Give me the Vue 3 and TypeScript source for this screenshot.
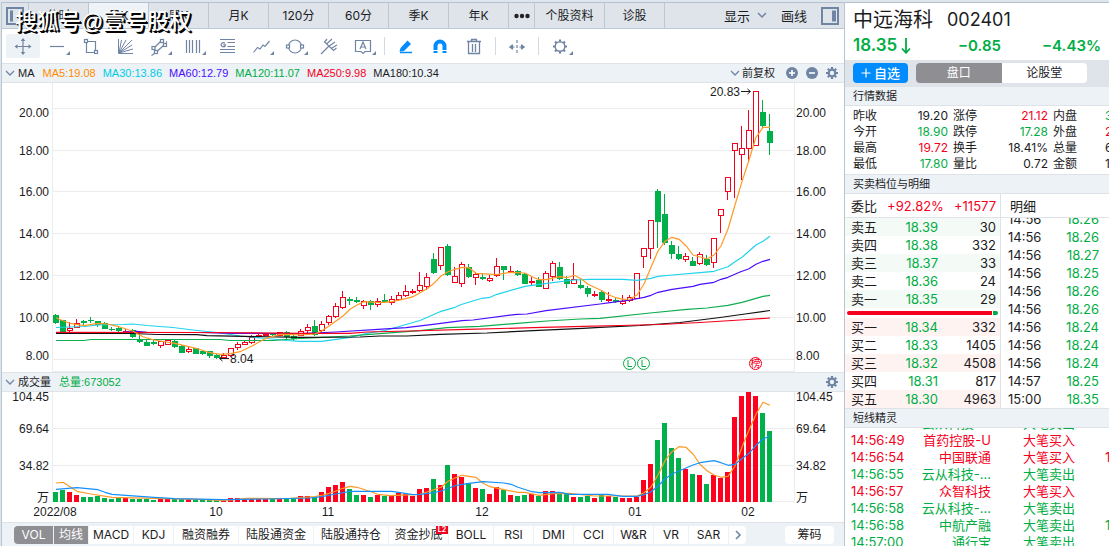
<script setup lang="ts">
import { ref } from 'vue'

type Tone = 'up' | 'down' | 'flat'
/** direction, high, body top, body bottom, low, top of the volume bar */
type Candle = ['r' | 'g', number, number, number, number, number]

const periods = ['分时', '日K', '周K', '月K', '120分', '60分', '季K', '年K']
const activePeriod = ref('日K')
const adjust = ref('前复权')

const averages = [
  { text: 'MA5:19.08', cls: 'ma5' },
  { text: 'MA30:13.86', cls: 'ma30' },
  { text: 'MA60:12.79', cls: 'ma60' },
  { text: 'MA120:11.07', cls: 'ma120' },
  { text: 'MA250:9.98', cls: 'ma250' },
  { text: 'MA180:10.34', cls: 'ma180' },
]

const priceAxis = [
  { label: '20.00', grid: 108, text: 117 },
  { label: '18.00', grid: 150, text: 155 },
  { label: '16.00', grid: 191, text: 196 },
  { label: '14.00', grid: 233, text: 238 },
  { label: '12.00', grid: 275, text: 280 },
  { label: '10.00', grid: 317, text: 322 },
  { label: '8.00', grid: 359, text: 360 },
]
const volumeAxis = [
  { label: '104.45', text: 401 },
  { label: '69.64', text: 433 },
  { label: '34.82', text: 470 },
  { label: '万', text: 502 },
]
const months = [
  { label: '2022/08', x: 55 },
  { label: '10', x: 216 },
  { label: '11', x: 328 },
  { label: '12', x: 482 },
  { label: '01', x: 635 },
  { label: '02', x: 748 },
]

const candles: Candle[] = [
  ['g', 314, 315, 323, 324, 492], ['g', 320, 320, 332, 332, 490], ['r', 322, 328, 330, 332, 492],
  ['r', 319, 323, 327, 328, 495], ['g', 320, 321, 323, 325, 497], ['g', 317, 320, 321, 323, 497],
  ['g', 321, 321, 325, 327, 496], ['g', 322, 323, 329, 329, 498], ['g', 327, 329, 330, 331, 499],
  ['g', 327, 328, 331, 332, 498], ['r', 329, 331, 332, 334, 498], ['g', 329, 330, 337, 338, 499],
  ['g', 334, 339, 342, 343, 499], ['g', 340, 342, 346, 346, 499], ['g', 340, 342, 344, 345, 500],
  ['r', 341, 341, 345, 348, 499], ['r', 340, 340, 344, 345, 498], ['g', 340, 341, 347, 348, 499],
  ['g', 345, 346, 353, 353, 499], ['r', 347, 349, 351, 353, 499], ['g', 348, 348, 354, 354, 500],
  ['g', 350, 351, 354, 355, 500], ['g', 351, 351, 356, 358, 500], ['g', 354, 355, 358, 359, 500],
  ['r', 353, 355, 357, 359, 500], ['r', 348, 348, 355, 357, 498], ['r', 342, 344, 347, 350, 498],
  ['r', 341, 342, 344, 345, 499], ['r', 335, 337, 342, 344, 499], ['r', 333, 335, 336, 338, 499],
  ['r', 333, 334, 335, 336, 499], ['g', 333, 334, 335, 336, 499], ['r', 332, 332, 335, 336, 498],
  ['g', 331, 332, 337, 339, 499], ['g', 335, 336, 339, 341, 499], ['r', 329, 331, 335, 336, 496],
  ['r', 324, 327, 330, 333, 496], ['g', 320, 326, 335, 336, 497], ['r', 321, 324, 330, 332, 492],
  ['r', 315, 316, 322, 325, 487], ['r', 303, 306, 316, 318, 485], ['r', 291, 297, 307, 309, 482],
  ['g', 297, 299, 301, 305, 489], ['g', 297, 300, 302, 303, 495], ['r', 300, 301, 305, 309, 495],
  ['g', 300, 301, 305, 310, 497], ['r', 298, 301, 304, 307, 495], ['g', 294, 300, 302, 303, 496],
  ['r', 296, 299, 302, 305, 496], ['r', 292, 295, 299, 301, 493], ['r', 285, 291, 295, 297, 494],
  ['r', 289, 291, 292, 294, 496], ['r', 272, 285, 290, 292, 489], ['r', 273, 277, 286, 290, 488],
  ['g', 253, 259, 273, 274, 479], ['r', 247, 247, 265, 270, 485], ['g', 244, 246, 275, 276, 465],
  ['r', 267, 276, 282, 283, 474], ['r', 262, 264, 283, 287, 477], ['g', 264, 267, 277, 278, 483],
  ['r', 272, 274, 277, 285, 488], ['g', 273, 277, 279, 280, 489], ['r', 275, 278, 280, 282, 494],
  ['r', 258, 266, 275, 277, 487], ['g', 266, 266, 270, 280, 490], ['r', 266, 271, 272, 273, 495],
  ['g', 270, 271, 275, 276, 496], ['g', 273, 274, 284, 284, 495], ['r', 276, 281, 282, 285, 494],
  ['g', 277, 280, 287, 287, 496], ['r', 271, 273, 288, 289, 491], ['r', 261, 263, 276, 281, 491],
  ['g', 262, 267, 279, 280, 493], ['g', 276, 279, 284, 288, 494], ['r', 263, 279, 283, 284, 497],
  ['g', 279, 285, 288, 289, 497], ['g', 286, 288, 294, 297, 496], ['r', 291, 294, 295, 297, 498],
  ['g', 291, 292, 300, 302, 495], ['r', 292, 299, 300, 302, 496], ['g', 297, 300, 302, 303, 497],
  ['r', 295, 301, 303, 305, 498], ['r', 295, 297, 300, 302, 498], ['r', 273, 273, 298, 299, 497],
  ['r', 248, 248, 256, 268, 480], ['r', 220, 220, 248, 259, 464], ['g', 189, 191, 222, 248, 440],
  ['g', 194, 214, 243, 245, 423], ['g', 241, 245, 254, 259, 448], ['g', 246, 254, 259, 260, 458],
  ['r', 253, 256, 259, 262, 469], ['g', 257, 261, 266, 266, 474], ['r', 252, 254, 263, 265, 475],
  ['g', 255, 259, 265, 266, 484], ['r', 238, 238, 262, 268, 475], ['r', 209, 209, 215, 233, 478],
  ['r', 177, 177, 191, 200, 472], ['r', 143, 143, 150, 198, 417], ['r', 126, 148, 154, 180, 396],
  ['r', 110, 130, 148, 162, 392], ['r', 91, 91, 145, 146, 396], ['g', 100, 112, 126, 128, 413],
  ['g', 114, 131, 143, 155, 431],
]
const centre = (i: number) => 56 + i * 7

const priceLines = [
  { cls: 'ma30', points: '56,327.5 84,326.5 98,325 123,324.5 133,324 147,325.5 173,327.5 193,330 217,332.5 240,336 267,338.5 287,340.5 300,341.3 322,341.3 336,339.3 350,337.3 367,333.3 385,330.5 399,326.5 420,320.5 440,311.7 455,307.3 462,304.3 482,298.3 490,297.3 497,294.3 525,286.3 547,283.3 574,280 590,279.3 623,279.3 637,280.3 651,278.3 658,276.3 672,275 700,272.6 714,271.3 728,266.7 735,261.7 742,257.3 756,245 763,241.3 770,236.3' },
  { cls: 'ma60', points: '56,332.5 123,332.3 137,331.3 147,332.3 200,332.5 233,333.3 267,333.5 300,333.7 336,332 378,329.3 406,327.7 433,324.3 462,320.7 473,320 517,314.3 527,314 546,310.7 600,304 610,302.7 630,300 644,297.3 651,295.3 658,292.3 672,289.3 693,286.3 700,284.3 714,282.3 721,279.3 728,277.3 740,272 749,268.7 756,264.3 763,261.3 770,259.3' },
  { cls: 'ma120', points: '56,340.5 84,340.5 91,339.5 220,339.5 230,340.5 273,340.5 300,338.5 322,337.3 350,336 383,333.3 420,330.7 447,327.7 480,326.3 517,323.3 547,321 580,319 600,318.3 650,313 687,309.3 707,308 728,305.3 742,302.3 756,298.3 763,296.3 770,295.3' },
  { cls: 'ma180', points: '56,333.5 133,333.5 157,334.5 197,334.7 207,335.7 300,337.3 360,337 380,336 407,336 440,334.3 487,333 533,330.7 583,328.3 600,327.3 640,325.5 680,322.5 720,317.5 745,314 770,310.5' },
  { cls: 'ma250', points: '56,332.3 200,332.5 300,333.3 350,333.3 367,332 410,331 467,329.3 533,327.7 583,326.3 620,325.5 660,324.5 700,322.5 740,320 770,318' },
  { cls: 'ma5', points: '56,317.7 63,320.7 70,323.3 84,325.7 98,323.3 107,324 119,326.7 133,331.3 143,336.7 154,340 175,343.3 196,348.3 210,352.7 220,354.3 231,353.7 240,351.7 252,346 266,338.3 280,334.3 293,334.7 300,335 315,334 322,330.7 329,326 336,321 343,316 350,309.3 357,305 364,301.7 380,302.7 392,301.7 406,298.7 413,296.7 427,288.7 434,283.3 441,276 448,271.7 455,269.3 462,267.3 469,267.7 476,273.3 497,274.7 511,272.3 525,273 532,276.7 539,279.7 546,279.7 560,276.7 567,277.7 574,275.3 581,278.7 588,284.3 602,290.7 609,295 616,297.7 623,299.3 630,299 637,295 644,284 651,267.3 658,251 665,241.3 672,237.3 679,239.3 686,245.7 693,255 707,259 714,255 721,246 728,229 735,205 742,181.7 749,160 756,137.3 763,127.3 770,127.3' },
]
const volumeLines = [
  { cls: 'ma5', points: '56,483 63,482.3 70,486.7 77,491.3 91,494 112,497.3 154,498.3 200,499.3 223,500.7 247,498.3 277,498.7 290,498.3 315,496.7 323,495 329,493.3 336,491 343,488.3 350,486.3 357,487.3 371,491.7 378,494.3 390,495.7 420,494.3 427,492 441,487.3 448,481.3 455,478 462,475.3 476,477.3 483,483.3 490,486.7 504,489.7 518,492.3 525,492.3 539,495.3 553,493.7 570,493.3 594,496 637,496 644,492.7 651,487 658,475 665,460.7 672,451.7 679,446.7 686,447.3 693,454 700,464.3 707,470.7 714,475 721,477.3 728,476.3 735,466 742,447 749,430 756,414.3 763,402.3 770,405.3' },
  { cls: 'ma10', points: '56,489.3 77,487.7 98,489.7 105,492.3 112,494.3 154,497.3 175,498.7 223,499.7 267,499 310,498 322,496.7 336,494 350,491.3 392,491.3 413,494.7 420,494.3 434,492.7 441,491 455,485.7 469,483.3 483,481.7 504,483 511,484.3 518,487.3 532,491.7 539,492.7 560,492.3 570,494.3 608,494.3 623,496.3 637,496.3 644,494.7 651,491.7 658,486 665,479 672,474 693,465 700,462.7 714,460.7 721,462.7 728,465.3 735,464.3 749,453.3 756,445.3 763,439.3 770,435.7' },
]

const indicators = [
  { text: 'VOL', w: 'w39', on: true },
  { text: '均线', w: 'w34', on: true },
  { text: 'MACD', w: 'w44' },
  { text: 'KDJ', w: 'w39' },
  { text: '融资融券', w: 'w64' },
  { text: '陆股通资金', w: 'w74' },
  { text: '陆股通持仓', w: 'w74' },
  { text: '资金抄底', w: 'w59', level2: true },
  { text: 'BOLL', w: 'w44' },
  { text: 'RSI', w: 'w39' },
  { text: 'DMI', w: 'w39' },
  { text: 'CCI', w: 'w39' },
  { text: 'W&R', w: 'w39' },
  { text: 'VR', w: 'w34' },
  { text: 'SAR', w: 'w39' },
]

const quote: [string, string, Tone][][] = [
  [['昨收', '19.20', 'flat'], ['涨停', '21.12', 'up'], ['内盘', '3', 'down']],
  [['今开', '18.90', 'down'], ['跌停', '17.28', 'down'], ['外盘', '2', 'up']],
  [['最高', '19.72', 'up'], ['换手', '18.41%', 'flat'], ['总量', '6', 'flat']],
  [['最低', '17.80', 'down'], ['量比', '0.72', 'flat'], ['金额', '1', 'flat']],
]
const asks = [
  ['卖五', '18.39', '30'], ['卖四', '18.38', '332'], ['卖三', '18.37', '33'],
  ['卖二', '18.36', '24'], ['卖一', '18.35', '29'],
]
const bids = [
  ['买一', '18.34', '332'], ['买二', '18.33', '1405'], ['买三', '18.32', '4508'],
  ['买四', '18.31', '817'], ['买五', '18.30', '4963'],
]
const buyShare = ref(96)
const ticks = [
  ['14:56', '18.26'], ['14:56', '18.26'], ['14:56', '18.27'], ['14:56', '18.25'],
  ['14:56', '18.26'], ['14:56', '18.26'], ['14:56', '18.24'], ['14:56', '18.24'],
  ['14:56', '18.24'], ['14:57', '18.25'], ['15:00', '18.35'],
]
const alerts: { time: string; name: string; act: string; tone: Tone; qty: string }[] = [
  { time: '', name: '云从科技-...', act: '大笔卖出', tone: 'down', qty: '' },
  { time: '14:56:49', name: '首药控股-U', act: '大笔买入', tone: 'up', qty: '' },
  { time: '14:56:54', name: '中国联通', act: '大笔买入', tone: 'up', qty: '1' },
  { time: '14:56:55', name: '云从科技-...', act: '大笔卖出', tone: 'down', qty: '' },
  { time: '14:56:57', name: '众智科技', act: '大笔买入', tone: 'up', qty: '' },
  { time: '14:56:58', name: '云从科技-...', act: '大笔卖出', tone: 'down', qty: '' },
  { time: '14:56:58', name: '中航产融', act: '大笔卖出', tone: 'down', qty: '1' },
  { time: '14:57:00', name: '通行宝', act: '大笔卖出', tone: 'down', qty: '' },
]
const gearTeeth = [0, 45, 90, 135, 180, 225, 270, 315]
</script>

<template>
  <div class="page">
    <main class="main">
      <nav class="periods">
        <button class="side" aria-label="左侧栏">
          <svg width="18" height="18" viewBox="0 0 18 18"><rect x="1" y="1" width="16" height="16" fill="none" stroke="#7085a3" stroke-width="2" /><rect x="4" y="3.500" width="3" height="11" fill="#7085a3" /></svg>
        </button>
        <button v-for="p in periods" :key="p" class="period" :class="{ on: p === activePeriod }" @click="activePeriod = p">{{ p }}</button>
        <button class="period more" aria-label="更多周期">
          <svg width="16" height="6" viewBox="0 0 16 6" fill="#222"><circle cx="2.500" cy="3" r="2.200" /><circle cx="8" cy="3" r="2.200" /><circle cx="13.500" cy="3" r="2.200" /></svg>
        </button>
        <button class="period info">个股资料</button>
        <button class="period">诊股</button>
        <span class="grow"></span>
        <button class="plain">显示
          <svg width="10" height="7" viewBox="0 0 10 7"><path d="M1 1l4 4 4-4" fill="none" stroke="#7085a3" stroke-width="1.500" /></svg>
        </button>
        <button class="plain">画线</button>
        <button class="plain" aria-label="右侧栏">
          <svg width="18" height="18" viewBox="0 0 18 18"><rect x="1" y="1" width="16" height="16" fill="none" stroke="#7085a3" stroke-width="2" /><rect x="11" y="3.500" width="4" height="11" fill="#7085a3" /></svg>
        </button>
        <span class="watermark">搜狐号@壹号股权</span>
      </nav>

      <div class="tools">
        <button class="tool on" aria-label="移动"><svg viewBox="0 0 34 24"><path d="M17 5v15M9.500 12.500h15" /><path class="solid" d="M17 4l2.300 3h-4.600zM17 21l2.300-3h-4.600zM8.500 12.500l3-2.300v4.600zM25.500 12.500l-3-2.300v4.600z" /></svg></button>
        <button class="tool" aria-label="直线"><svg viewBox="0 0 34 24"><path d="M10 12.500h14" /><path class="solid" d="M30 17v4h-4z" /></svg></button>
        <button class="tool" aria-label="矩形"><svg viewBox="0 0 34 24"><path d="M13.500 7.500H21.500V16.500M20.500 18.500H12.500V8.500" /><rect x="10.500" y="5.500" width="3" height="3" /><rect x="20.500" y="16.500" width="3" height="3" /></svg></button>
        <button class="tool" aria-label="角度线"><svg viewBox="0 0 34 24" class="thin"><path d="M10.500 5v14.500H25M11 19l2.500-13M11 19L18 6M11 19L24 6M11 19l13-8M11 19l14-4" /></svg></button>
        <button class="tool" aria-label="平行线"><svg viewBox="0 0 34 24"><path d="M12.500 13.500L18.500 7.500M22 11L15.500 17M12.500 19.500l-3 2M24 8.500l1-1" /><rect class="blank" x="18.500" y="5.500" width="3" height="3" /><rect class="blank" x="10" y="12.500" width="3" height="3" /><rect class="blank" x="21.500" y="9.500" width="3" height="3" /><rect class="blank" x="12.500" y="16.500" width="3" height="3" /><path class="solid" d="M30 17v4h-4z" /></svg></button>
        <button class="tool" aria-label="周期线"><svg viewBox="0 0 34 24"><path d="M10.500 6v13M13.500 6v13M16.500 6v13M20.500 6v13M23.500 6v13" /><path class="solid" d="M30 17v4h-4z" /></svg></button>
        <button class="tool" aria-label="黄金分割"><svg viewBox="0 0 34 24"><path d="M10 5.500h15M17.500 8.500h7.500M17.500 12.500h7.500M10 15.500h15M10 18.500h15M15 9.200a2.300 2 0 1 0 .3 2.600v-1h-2" /></svg></button>
        <button class="tool" aria-label="折线"><svg viewBox="0 0 34 24"><path d="M9.500 18.500l4-5 2.500 1.500 3-4 2 1.500 4.500-5.500" /><path class="solid" d="M30 17v4h-4z" /></svg></button>
        <button class="tool" aria-label="圆"><svg viewBox="0 0 34 24"><circle cx="17" cy="12.500" r="6.500" /><rect class="blank" x="8.500" y="11" width="3" height="3" /><rect class="blank" x="22.500" y="11" width="3" height="3" /><path class="solid" d="M30 17v4h-4z" /></svg></button>
        <button class="tool" aria-label="音叉线"><svg viewBox="0 0 34 24"><path d="M9 20L16.500 12.500M15 5L12.500 8 21.500 16.500 24.500 14M16.500 12.500L23 8M14.500 10L20 5M19 14.500l6-3.500" /></svg></button>
        <button class="tool" aria-label="文字"><svg viewBox="0 0 34 24"><path d="M9.500 6.500h15v11h-5.500l-2 2-2-2H9.500z" /><path d="M14 15l3-7 3 7M15 13h4" /><path class="solid" d="M30 17v4h-4z" /></svg></button>
        <i class="bar"></i>
        <button class="tool blue" aria-label="画笔"><svg viewBox="0 0 34 24"><path class="solid" d="M11.500 14L18.500 6.500l3.500 3.500-7 7-4.500.8z" /><path d="M11 18.500h12" stroke-width="1.500" /></svg></button>
        <button class="tool blue" aria-label="磁吸"><svg viewBox="0 0 34 24"><path class="solid" d="M10.500 19v-7a6.500 6.500 0 0 1 13 0v7h-4v-7a2.500 2.500 0 0 0-5 0v7z" /><path d="M10 16.500h5M19 16.500h5" stroke="#fff" /></svg></button>
        <button class="tool" aria-label="删除"><svg viewBox="0 0 34 24"><path d="M10 7.500h14M14.500 7V5.500h5V7M11.500 8v11.500h11V8M15.500 10v8M18.500 10v8" stroke-width="1.300" /></svg></button>
        <i class="bar"></i>
        <button class="tool" aria-label="区间"><svg viewBox="0 0 34 24"><path d="M17 6v14" stroke-dasharray="3 2" /><path d="M9.500 13h5M19.500 13h5M12.500 10.500v5M21.500 10.500v5" /><path class="solid" d="M9 13l3-2.500v5zM25 13l-3-2.500v5z" /></svg></button>
        <i class="bar"></i>
        <button class="tool" aria-label="设置"><svg viewBox="0 0 34 24"><circle cx="17" cy="12.500" r="4.800" stroke-width="1.400" /><path v-for="a in gearTeeth" :key="a" d="M17 5.500v2" stroke-width="2" :transform="`rotate(${a} 17 12.500)`" /><path class="solid" d="M30 17v4h-4z" /></svg></button>
      </div>

      <div class="caption">
        <svg class="chev" width="10" height="7" viewBox="0 0 10 7"><path d="M1 1l4 4 4-4" fill="none" stroke="#7085a3" stroke-width="1.300" /></svg>
        <span class="name">MA</span>
        <span v-for="m in averages" :key="m.text" class="avg" :class="m.cls">{{ m.text }}</span>
        <span class="grow"></span>
        <label class="adjust">
          <svg width="10" height="7" viewBox="0 0 10 7"><path d="M1 1l4 4 4-4" fill="none" stroke="#7085a3" stroke-width="1.300" /></svg>
          <select v-model="adjust" aria-label="复权方式"><option>前复权</option></select>
        </label>
        <button class="mini" aria-label="放大"><svg width="12" height="12" viewBox="0 0 12 12"><circle cx="6" cy="6" r="6" fill="#7085a3" /><path d="M3 6h6M6 3v6" stroke="#fff" stroke-width="1.600" /></svg></button>
        <button class="mini" aria-label="缩小"><svg width="12" height="12" viewBox="0 0 12 12"><circle cx="6" cy="6" r="6" fill="#7085a3" /><path d="M3 6h6" stroke="#fff" stroke-width="1.600" /></svg></button>
        <button class="mini" aria-label="均线设置"><svg width="12" height="12" viewBox="0 0 12 12"><circle cx="6" cy="6" r="3.300" fill="none" stroke="#7085a3" stroke-width="2.200" /><path v-for="a in gearTeeth" :key="a" d="M6 0v2" stroke="#7085a3" stroke-width="2.200" :transform="`rotate(${a} 6 6)`" /></svg></button>
      </div>

      <svg class="chart" viewBox="2 83 842 289">
        <g class="grid">
          <path v-for="t in priceAxis" :key="t.label" :d="`M53 ${t.grid}.500H794`" />
          <path d="M52.500 83V371.500H794.500V83" />
        </g>
        <g v-for="t in priceAxis" :key="t.label" class="axis">
          <text x="49" :y="t.text" text-anchor="end">{{ t.label }}</text>
          <text x="796" :y="t.text">{{ t.label }}</text>
        </g>
        <g v-for="(c, i) in candles" :key="i" :class="c[0]">
          <path class="wick" :d="`M${centre(i) - 0.5} ${c[1]}V${c[2]}M${centre(i) - 0.5} ${c[3]}V${c[4]}`" />
          <rect v-if="c[0] === 'g'" class="body" :x="centre(i) - 3" :y="c[2]" width="6" :height="c[3] - c[2]" />
          <rect v-else class="hollow" :x="centre(i) - 2.5" :y="c[2] + 0.5" width="5" :height="c[3] - c[2]" />
        </g>
        <polyline v-for="l in priceLines" :key="l.cls" class="line" :class="l.cls" :points="l.points" />
        <text class="mark" x="710" y="96">20.83</text>
        <path class="arrow" d="M741 91.500h9M747.500 89l3 2.500-3 2.500" />
        <text class="mark" x="230" y="363">8.04</text>
        <path class="arrow" d="M220 358.500h9M222.500 356l-3 2.500 3 2.500" />
        <g class="event down"><circle cx="629.500" cy="363.500" r="6" /><path d="M628 360v6.500h4" /><circle cx="643.500" cy="363.500" r="6" /><path d="M642 360v6.500h4" /></g>
        <g class="event up"><circle cx="755.500" cy="363.500" r="6" /><text x="755.500" y="367" text-anchor="middle">榜</text></g>
      </svg>

      <div class="caption volume">
        <svg class="chev" width="10" height="7" viewBox="0 0 10 7"><path d="M1 1l4 4 4-4" fill="none" stroke="#7085a3" stroke-width="1.300" /></svg>
        <span class="name">成交量</span>
        <span class="avg ma120">总量:673052</span>
        <span class="grow"></span>
        <button class="mini" aria-label="成交量设置"><svg width="12" height="12" viewBox="0 0 12 12"><circle cx="6" cy="6" r="3.300" fill="none" stroke="#7085a3" stroke-width="2.200" /><path v-for="a in gearTeeth" :key="a" d="M6 0v2" stroke="#7085a3" stroke-width="2.200" :transform="`rotate(${a} 6 6)`" /></svg></button>
      </div>

      <svg class="chart" viewBox="2 392 842 130">
        <path class="grid" d="M52.500 392V501.500H794.500V392M53 428.500H794M53 465.500H794" />
        <g v-for="t in volumeAxis" :key="t.label" class="axis">
          <text x="49" :y="t.text" text-anchor="end">{{ t.label }}</text>
          <text x="796" :y="t.text">{{ t.label }}</text>
        </g>
        <rect v-for="(c, i) in candles" :key="i" class="body" :class="c[0]" :x="centre(i) - 3" :y="c[5]" width="5" :height="502 - c[5]" />
        <polyline v-for="l in volumeLines" :key="l.cls" class="line" :class="l.cls" :points="l.points" />
        <text v-for="m in months" :key="m.label" class="axis" :x="m.x" y="516" text-anchor="middle">{{ m.label }}</text>
      </svg>

      <div class="indicators">
        <button v-for="t in indicators" :key="t.text" class="ind" :class="[t.w, { on: t.on }]">{{ t.text }}<b v-if="t.level2" class="badge">L2</b></button>
        <button class="ind next" aria-label="更多指标"><svg width="8" height="10" viewBox="0 0 8 10"><path d="M2 1l4 4-4 4" fill="none" stroke="#7085a3" stroke-width="1.600" /></svg></button>
        <span class="grow"></span>
        <button class="ind chips">筹码</button>
      </div>
    </main>

    <aside class="panel">
      <h1 class="title"><span>中远海科</span><span>002401</span></h1>
      <div class="price down">
        <span>18.35<svg width="10" height="16" viewBox="0 0 10 16"><path d="M5 0v14.500M1 10.500l4 4.300 4-4.300" fill="none" stroke="currentColor" stroke-width="1.800" /></svg></span>
        <span>−0.85</span>
        <span>−4.43%</span>
      </div>
      <div class="switch">
        <button class="add"><svg width="10" height="10" viewBox="0 0 10 10"><path d="M0.500 5h9M5 .5v9" stroke="#fff" stroke-width="1.200" /></svg>自选</button>
        <div class="segments"><button class="on">盘口</button><button>论股堂</button></div>
      </div>
      <h2 class="section">行情数据</h2>
      <table class="quote">
        <tbody>
          <tr v-for="(row, r) in quote" :key="r">
            <template v-for="cell in row" :key="cell[0]"><th scope="row">{{ cell[0] }}</th><td :class="cell[2]">{{ cell[1] }}</td></template>
          </tr>
        </tbody>
      </table>
      <h2 class="section">买卖档位与明细</h2>
      <div class="depth">
        <div class="book">
          <div class="ratio"><span>委比</span><span class="up">+92.82%</span><span class="up">+11577</span></div>
          <table class="levels asks"><tbody><tr v-for="a in asks" :key="a[0]"><th scope="row">{{ a[0] }}</th><td class="down">{{ a[1] }}</td><td>{{ a[2] }}</td></tr></tbody></table>
          <div class="balance"><i class="buy" :style="{ width: buyShare + '%' }"></i><i class="sell"></i></div>
          <table class="levels bids"><tbody><tr v-for="b in bids" :key="b[0]"><th scope="row">{{ b[0] }}</th><td class="down">{{ b[1] }}</td><td>{{ b[2] }}</td></tr></tbody></table>
        </div>
        <div class="tape">
          <div class="tapehead">明细</div>
          <div class="tapebody">
            <table class="ticks"><tbody><tr v-for="(t, i) in ticks" :key="i"><td>{{ t[0] }}</td><td class="down">{{ t[1] }}</td></tr></tbody></table>
          </div>
        </div>
      </div>
      <h2 class="section">短线精灵</h2>
      <div class="feed">
        <table class="alerts"><tbody>
          <tr v-for="(a, i) in alerts" :key="i" :class="a.tone"><td>{{ a.time }}</td><td>{{ a.name }}</td><td>{{ a.act }}</td><td>{{ a.qty }}</td></tr>
        </tbody></table>
      </div>
    </aside>
  </div>
</template>

<style>
body { margin: 0; background: #dee5ec; }
</style>

<style scoped>
* { box-sizing: border-box; }
.page {
  display: grid;
  grid-template-columns: minmax(0, 1fr) 265px;
  height: 100vh;
  padding: 2px 0 0 1px;
  overflow: hidden;
  color: #1c1c1e;
  font: 12px/16px "Liberation Sans", "Noto Sans CJK SC", sans-serif;
}
button { margin: 0; padding: 0; border: 0; background: none; color: inherit; font: inherit; cursor: pointer; }
svg { display: block; flex: none; }
.grow { flex: 1; }
.up { color: #f5001d; }
.down { color: #00ad45; }
.flat { color: #1c1c1e; }

.main { display: flex; flex-direction: column; min-width: 0; background: #fff; border-left: 1px solid #bac5d2; border-top: 1px solid #b4c0ce; }
.periods { position: relative; display: flex; height: 26px; background: #dee4ea; border-bottom: 1px solid #bcc8d5; font-family: Inter, "Noto Sans CJK SC", sans-serif; }
.side { width: 27px; border-right: 1px solid #bcc8d5; padding-left: 4px; }
.period { width: 60px; border-right: 1px solid #bcc8d5; }
.period.on { background: #eef3f8; }
.more { display: flex; align-items: center; justify-content: center; width: 26px; }
.info { width: 70px; }
.plain { display: flex; align-items: center; gap: 7px; margin-right: 14px; font-size: 13px; }
.plain:last-of-type { margin-right: 5px; }
.watermark { position: absolute; left: 13px; top: 5px; color: #fff; font: 500 22px/28px "Liberation Sans", "Noto Sans CJK SC", sans-serif; text-shadow: 1px 1px 0 #000, 2px 2px 0 #000; white-space: nowrap; pointer-events: none; }

.tools { display: flex; align-items: center; height: 34px; padding-left: 4px; }
.tool { width: 34px; height: 24px; border-radius: 2px; color: #7085a3; }
.tool.on { background: #edf2f7; }
.tool.blue { color: #008cff; }
.tool svg { width: 34px; height: 24px; fill: none; stroke: currentColor; stroke-width: 1.2; }
.tool .thin { stroke-width: 1; }
.tool .solid { fill: currentColor; stroke: none; }
.tool .blank { fill: #fff; }
.bar { width: 1px; height: 18px; margin: 0 4px; background: #d3d9e0; }

.caption { display: flex; align-items: center; height: 20px; padding: 0 6px 0 3px; background: #edf2f6; border-top: 1px solid #dfe3e7; border-bottom: 1px solid #dfe3e7; font-size: 11px; }
.chev { margin-right: 3px; }
.name { margin-right: 8px; }
.avg { margin-right: 7px; }
.avg.ma5 { color: #ff8c00; }
.avg.ma30 { color: #00cbe6; }
.avg.ma60 { color: #4a0dff; }
.avg.ma120 { color: #00ad45; }
.avg.ma250 { color: #f5001d; }
.adjust { display: flex; align-items: center; gap: 2px; }
.adjust select { width: 34px; padding: 0; border: 0; background: none; appearance: none; color: inherit; font: inherit; }
.mini { margin-left: 8px; }
.adjust + .mini { margin-left: 10px; }

.chart { width: 100%; height: auto; overflow: visible; }
.grid path, path.grid { fill: none; stroke: #ececec; }
.axis, .mark { fill: #1c1c1e; font-size: 12px; }
.r .wick { stroke: #f5001d; }
.g .wick { stroke: #00ad45; }
.g .body, .body.g { fill: #00b04a; }
.body.r { fill: #ff001f; }
.hollow { fill: #fff; stroke: #f5001d; }
.line { fill: none; stroke-width: 1.2; stroke-linejoin: round; }
.line.ma5 { stroke: #ff9a26; }
.line.ma10 { stroke: #1490fa; }
.line.ma30 { stroke: #1fd3ec; }
.line.ma60 { stroke: #4a0dff; }
.line.ma120 { stroke: #10ad50; }
.line.ma180 { stroke: #111; }
.line.ma250 { stroke: #f5001d; }
.arrow { fill: none; stroke: #1c1c1e; }
.event { fill: none; stroke: currentColor; }
.event text { fill: currentColor; stroke: none; font-size: 10px; }

.indicators { display: flex; align-items: center; gap: 1px; flex: 1; padding: 0 10px 0 12px; background: #edf2f6; border-top: 1px solid #dfe3e7; font-family: Inter, "Noto Sans CJK SC", sans-serif; white-space: nowrap; }
.ind { position: relative; height: 18px; line-height: 18px; background: #fff; }
.ind:first-child { border-radius: 4px 0 0 4px; }
.ind.on { background: #8e8e93; color: #fff; }
.w34 { width: 34px; }
.w39 { width: 39px; }
.w44 { width: 44px; }
.w59 { width: 59px; }
.w64 { width: 64px; }
.w74 { width: 74px; }
.badge { position: absolute; right: 0; top: 0; width: 12px; height: 8px; background: #f5001d; color: #fff; font-size: 7px; line-height: 8px; }
.next { display: flex; align-items: center; justify-content: center; width: 17px; border-radius: 0 4px 4px 0; }
.chips { width: 49px; border-radius: 4px; }

.panel { min-width: 0; overflow: hidden; background: #fff; border-left: 1px solid #bac5d2; border-top: 1px solid #b4c0ce; font-family: Inter, "Noto Sans CJK SC", sans-serif; white-space: nowrap; }
.title { display: flex; gap: 14px; margin: 0; padding: 3px 0 0 8px; font-size: 20px; line-height: 28px; font-weight: 400; }
.title span + span { font-size: 18px; }
.price { display: grid; grid-template-columns: 60px 88px minmax(0, 1fr); padding: 0 8px 3px; font-size: 17px; line-height: 23px; font-weight: 600; }
.price span { display: flex; align-items: center; gap: 4px; }
.price span + span { justify-content: flex-end; font-size: 15px; }
.switch { display: flex; gap: 8px; padding: 3px 8px; background: #dee4ea; }
.add { display: flex; align-items: center; justify-content: center; gap: 3px; width: 55px; height: 20px; border-radius: 4px; background: #008cff; color: #fff; font-size: 13px; font-weight: 500; }
.segments { display: flex; width: 171px; height: 20px; border-radius: 4px; overflow: hidden; background: #fff; }
.segments button { flex: 1; }
.segments .on { background: #8e8e93; color: #fff; }
.section { height: 20px; margin: 0; padding-left: 8px; background: #edf2f6; border-top: 1px solid #dfe3e7; border-bottom: 1px solid #dfe3e7; font-size: 11px; line-height: 18px; font-weight: 400; }
table { border-collapse: collapse; table-layout: fixed; }
th, td { padding: 0; font-weight: 400; text-align: right; overflow: hidden; }
th { text-align: left; }
.quote { width: 300px; margin: 2px 0 2px 8px; }
.quote tr { height: 16px; }
.quote th { width: 28px; }
.quote td { width: 72px; padding-right: 5px; }
.quote td:last-child { padding-left: 24px; text-align: left; }
.depth { display: flex; }
.book { width: 156px; border-right: 1px solid #dfe3e7; font-size: 13px; }
.ratio { display: flex; justify-content: space-between; height: 24px; padding: 0 4px 0 6px; border-bottom: 1px solid #dfe3e7; line-height: 25px; }
.levels { width: 100%; }
.levels tr { height: 18px; }
.levels th { width: 34px; padding-left: 6px; }
.levels td { width: 59px; }
.levels td:last-child { width: auto; padding-right: 4px; }
.asks tr:nth-child(odd) { background: #f4faf6; }
.bids tr:nth-child(odd) { background: #fff3f2; }
.balance { display: flex; gap: 1px; height: 4px; margin: 3px 2px; border-radius: 2px; overflow: hidden; }
.buy { background: #f5001d; }
.sell { flex: 1; background: #00ad45; }
.tape { display: flex; flex-direction: column; flex: 1; font-size: 13px; }
.tapehead { height: 24px; padding-left: 9px; border-bottom: 1px solid #dfe3e7; line-height: 24px; }
.tapebody { display: flex; flex-direction: column; justify-content: flex-end; flex: 1 1 0px; min-height: 0; overflow: hidden; }
.ticks { width: 91px; margin-left: 7px; }
.ticks tr { height: 18px; }
.ticks td:first-child { text-align: left; }
.feed { overflow: hidden; }
.alerts { width: 290px; margin: -14px 0 0 6px; font-size: 13px; }
.alerts tr { height: 17px; }
.alerts td { width: 64px; }
.alerts td:nth-child(1) { text-align: left; }
.alerts td:nth-child(2) { width: 76px; }
.alerts td:nth-child(3) { width: 84px; }
.alerts td:nth-child(4) { width: 66px; padding-left: 30px; text-align: left; }
</style>
